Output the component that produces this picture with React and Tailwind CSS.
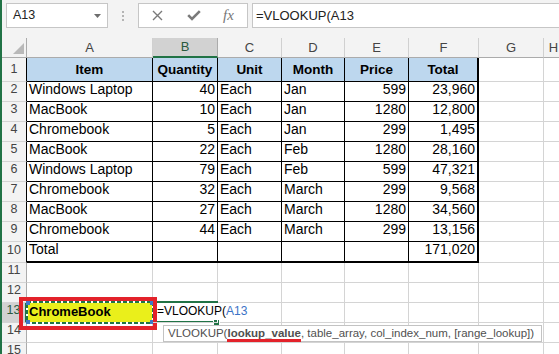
import React from 'react';

const WIDTHS = ['w-[126px]', 'w-[65px]', 'w-[64px]', 'w-[63px]', 'w-[64px]', 'w-[70px]', 'w-[65px]', 'w-[20px]'];
const LETTERS = ['A', 'B', 'C', 'D', 'E', 'F', 'G', 'H'];

const HEAD = ['Item', 'Quantity', 'Unit', 'Month', 'Price', 'Total'];
const DATA = [
  ['Windows Laptop', '40', 'Each', 'Jan', '599', '23,960'],
  ['MacBook', '10', 'Each', 'Jan', '1280', '12,800'],
  ['Chromebook', '5', 'Each', 'Jan', '299', '1,495'],
  ['MacBook', '22', 'Each', 'Feb', '1280', '28,160'],
  ['Windows Laptop', '79', 'Each', 'Feb', '599', '47,321'],
  ['Chromebook', '32', 'Each', 'March', '299', '9,568'],
  ['MacBook', '27', 'Each', 'March', '1280', '34,560'],
  ['Chromebook', '44', 'Each', 'March', '299', '13,156'],
  ['Total', '', '', '', '', '171,020'],
];
const RIGHT = [false, true, false, false, true, true];

function borderCls(r, c) {
  const inT = r <= 10 && c <= 5;
  if (inT) {
    const br = c === 5 ? 'border-r-2 border-r-black' : 'border-r border-r-black';
    const bb = r === 10 ? 'border-b-2 border-b-black' : 'border-b border-b-black';
    return br + ' ' + bb;
  }
  if (r === 13 && c === 1) return 'border-r border-r-white border-b border-b-[#d4d4d4]';
  return 'border-r border-r-[#d4d4d4] border-b border-b-[#d4d4d4]';
}

function rowH(r) {
  if (r === 1) return 'h-[24px]';
  if (r === 10) return 'h-[21px]';
  return 'h-[20px]';
}

function Cell({ r, c }) {
  const base = 'shrink-0 flex whitespace-nowrap ' + WIDTHS[c] + ' ' + borderCls(r, c);
  if (r === 1 && c <= 5) {
    return (
      <div className={base + ' bg-[#bdd7ee] items-end justify-center pb-[1px] text-[13.5px] font-bold text-black'}>
        {HEAD[c]}
      </div>
    );
  }
  if (r >= 2 && r <= 10 && c <= 5) {
    const v = DATA[r - 2][c];
    const right = RIGHT[c] || (r === 10 && c === 5);
    return (
      <div className={base + ' items-end pb-[1px] text-[14px] text-black ' + (right ? 'justify-end pr-[2px]' : 'pl-[2px]')}>
        {v}
      </div>
    );
  }
  if (r === 13 && c === 0) {
    return (
      <div className={base + ' bg-[#eaef1b] items-end pb-[1px] pl-[2px] text-[13px] font-bold text-black'}>
        ChromeBook
      </div>
    );
  }
  if (r === 13 && c === 1) {
    return (
      <div className={base + ' relative z-10 items-end pb-[2px] pl-[4px] text-[12px] text-black overflow-visible'}>
        <span>=VLOOKUP(</span>
        <span className="text-[#3b73c6]">A13</span>
        <span className="inline-block w-px h-[15px] bg-black ml-[2px] mb-[-1px]"></span>
      </div>
    );
  }
  return <div className={base}></div>;
}

function RowHeader({ r }) {
  const sel = r === 13;
  const right = sel
    ? 'border-r-2 border-r-[#217346]'
    : r <= 10
    ? 'border-r border-r-black'
    : 'border-r border-r-[#ababab]';
  return (
    <div
      className={
        'w-[25px] shrink-0 flex items-end justify-center pb-[2px] text-[12.5px] border-b border-b-[#d4d4d4] ' +
        right +
        (sel ? ' bg-[#d2d2d2] text-[#2a5a3e]' : ' bg-[#f3f3f3] text-[#444]')
      }
    >
      {r}
    </div>
  );
}

export default function App() {
  const rows = [];
  for (let r = 1; r <= 15; r++) rows.push(r);
  return (
    <div className="relative w-[559px] h-[354px] overflow-hidden bg-white font-['Liberation_Sans',Arial,sans-serif] flex">
      <div className="w-[2px] shrink-0 bg-[#217346]"></div>
      <div className="flex-1 flex flex-col min-w-0">
        {/* formula bar */}
        <div className="h-[38px] shrink-0 bg-[#f3f3f3] flex items-start pt-[3px]">
          <div className="ml-[4px] w-[102px] h-[25px] shrink-0 bg-white border border-[#c6c6c6] flex items-center justify-between pl-[6px] pr-[6px]">
            <span className="text-[12.5px] text-[#222]">A13</span>
            <svg width="7" height="4" viewBox="0 0 7 4">
              <path d="M0 0h7L3.5 4z" fill="#6d6d6d" />
            </svg>
          </div>
          <div className="w-[30px] h-[25px] shrink-0 flex flex-col items-center justify-center gap-[2px]">
            <div className="w-[2px] h-[2px] bg-[#b4b4b4]"></div>
            <div className="w-[2px] h-[2px] bg-[#b4b4b4]"></div>
            <div className="w-[2px] h-[2px] bg-[#b4b4b4]"></div>
          </div>
          <div className="w-[110px] h-[25px] shrink-0 bg-white border border-[#c6c6c6] flex items-center">
            <svg className="ml-[13px]" width="11" height="11" viewBox="0 0 11 11">
              <path d="M1 1L10 10M10 1L1 10" stroke="#7a7a7a" strokeWidth="1.4" fill="none" />
            </svg>
            <svg className="ml-[24px]" width="14" height="11" viewBox="0 0 14 11">
              <path d="M1.2 5.2L5 9L12.8 1.2" stroke="#7a7a7a" strokeWidth="2.6" fill="none" />
            </svg>
            <span className="ml-[22px] font-['Liberation_Serif',serif] italic text-[15px] text-[#777] leading-none">fx</span>
          </div>
          <div className="ml-[4px] flex-1 h-[25px] bg-white border border-[#c6c6c6] border-r-0 flex items-center pl-[3px] text-[13px] text-[#222]">
            =VLOOKUP(A13
          </div>
        </div>

        {/* column headers */}
        <div className="flex h-[20px] shrink-0">
          <div className="w-[25px] shrink-0 bg-[#f3f3f3] border-r border-r-[#ababab] border-b border-b-[#ababab] flex items-end justify-end pr-[2px] pb-[3px]">
            <svg width="11" height="11" viewBox="0 0 11 11">
              <path d="M11 0V11H0z" fill="#b9b9b9" />
            </svg>
          </div>
          {LETTERS.map((L, c) =>
            c === 1 ? (
              <div
                key={L}
                className={WIDTHS[c] + ' shrink-0 flex items-center justify-center text-[13px] bg-[#d2d2d2] text-[#2a5a3e] border-r border-r-[#ababab] border-b-2 border-b-[#217346]'}
              >
                {L}
              </div>
            ) : (
              <div
                key={L}
                className={WIDTHS[c] + ' shrink-0 flex items-center justify-center text-[13px] bg-[#f3f3f3] text-[#444] border-r border-r-[#d0d0d0] border-b border-b-[#ababab]'}
              >
                {L}
              </div>
            )
          )}
        </div>

        {/* rows */}
        {rows.map((r) => (
          <div key={r} className={'flex shrink-0 ' + rowH(r)}>
            <RowHeader r={r} />
            {LETTERS.map((L, c) => (
              <Cell key={L} r={r} c={c} />
            ))}
          </div>
        ))}
      </div>

      {/* marching ants around A13 */}
      <svg className="absolute left-[26px] top-[301px]" width="128" height="23" viewBox="0 0 128 23">
        <rect x="1" y="1" width="126" height="21" fill="none" stroke="#ffffff" strokeWidth="2" />
        <rect x="1" y="1" width="126" height="21" fill="none" stroke="#217346" strokeWidth="2" strokeDasharray="4 2" />
      </svg>
      <div className="absolute left-[26px] top-[301px] w-[4px] h-[4px] bg-[#3f78c8]"></div>
      <div className="absolute left-[150px] top-[301px] w-[4px] h-[4px] bg-[#3f78c8]"></div>
      <div className="absolute left-[26px] top-[320px] w-[4px] h-[4px] bg-[#3f78c8]"></div>
      <div className="absolute left-[150px] top-[320px] w-[4px] h-[4px] bg-[#3f78c8]"></div>

      {/* active cell B13 border */}
      <div className="absolute left-[154px] top-[301px] w-[64px] h-[2px] bg-[#217346]"></div>
      <div className="absolute left-[154px] top-[321px] w-[60px] h-[2px] bg-[#217346]"></div>
      <div className="absolute left-[213px] top-[319px] w-[7px] h-[7px] bg-[#217346] border border-white"></div>

      {/* red annotation box */}
      <div className="absolute left-[19px] top-[297px] w-[138px] h-[33px] border-4 border-[#e3222a]"></div>

      {/* function tooltip */}
      <div className="absolute left-[163px] top-[325px] w-[379px] h-[17px] bg-white border border-[#c3c3c3] flex items-center pl-[4px] text-[11.5px] text-[#505050] whitespace-nowrap">
        <span>VLOOKUP(</span>
        <span className="relative font-bold">
          lookup_value
          <span className="absolute left-0 right-0 top-[14px] h-[3px] bg-[#e3222a]"></span>
        </span>
        <span>, table_array, col_index_num, [range_lookup])</span>
      </div>
    </div>
  );
}
